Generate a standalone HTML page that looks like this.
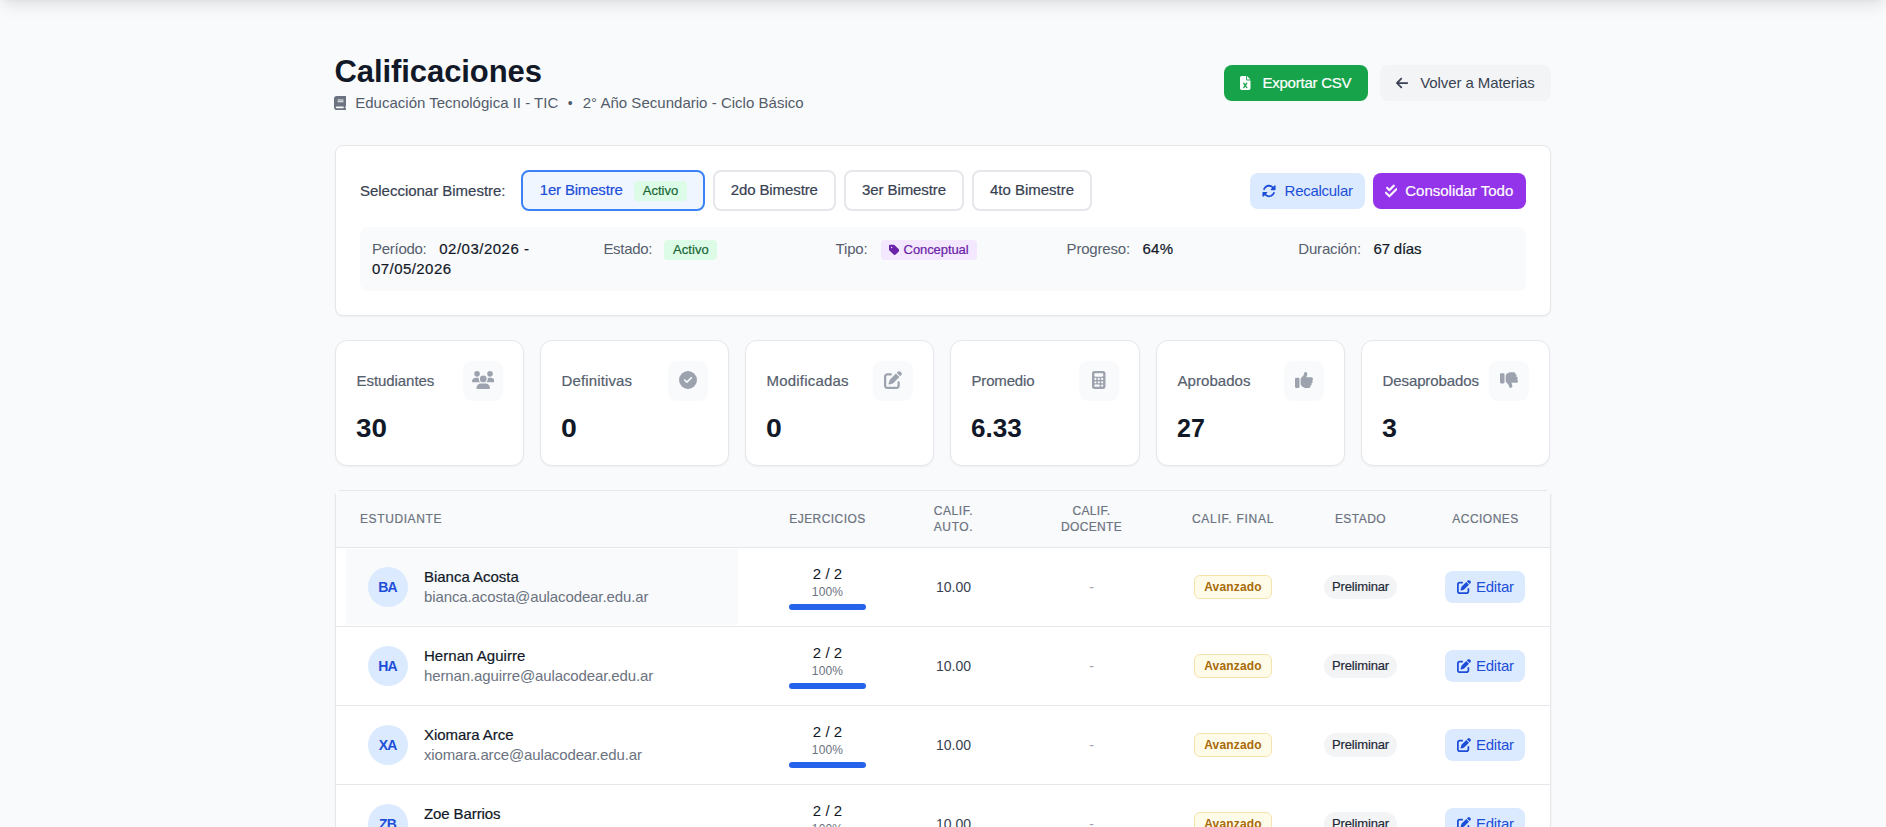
<!DOCTYPE html>
<html lang="es">
<head>
<meta charset="utf-8">
<title>Calificaciones</title>
<style>
*{box-sizing:border-box;margin:0;padding:0}
html,body{width:1886px;height:827px;overflow:hidden}
body{background:#f9fafb;font-family:"Liberation Sans",sans-serif;color:#111827;font-size:14px;line-height:20px;position:relative}
svg{display:block;fill:currentColor}
.topshadow{position:absolute;left:0;top:-66px;width:1886px;height:64px;background:#fff;box-shadow:0 10px 15px -3px rgba(0,0,0,.1),0 4px 6px -4px rgba(0,0,0,.1)}
.abs{position:absolute}
.med{-webkit-text-stroke:.2px currentColor}
/* header */
h1{position:absolute;left:334.5px;top:54px;font-size:30px;line-height:36px;font-weight:700;color:#111827;white-space:nowrap}
.sub{position:absolute;left:334px;top:93px;height:20px;display:flex;align-items:center;color:#535c6b;white-space:nowrap}
.sub svg{width:12.25px;height:14px;color:#6b7280;margin-right:9px}
.btn{position:absolute;height:36px;border-radius:8px;display:flex;align-items:center;white-space:nowrap;font-size:14px}
.b-exp{left:1224px;top:65px;width:144px;background:#16a34a;color:#fff;padding-left:16px}
.b-vol{left:1380px;top:65px;width:171px;background:#f3f4f6;color:#374151;padding-left:16px}
.b-rec{left:1250px;top:173px;width:115px;background:#dbeafe;color:#1d4ed8;padding-left:12px}
.b-con{left:1373px;top:173px;width:153px;background:#9333ea;color:#fff;padding-left:12px}
/* card */
.card{position:absolute;left:335px;top:145px;width:1216px;height:171px;background:#fff;border:1px solid #e5e7eb;border-radius:8px;box-shadow:0 1px 2px rgba(0,0,0,.05)}
.sel{position:absolute;left:360px;top:181px;color:#374151;white-space:nowrap}
.bim{position:absolute;top:170px;height:40.75px;border:2px solid #e5e7eb;border-radius:8px;background:#fff;color:#374151;display:flex;align-items:flex-start;justify-content:center;padding:8px 0 0;white-space:nowrap}
.bim.on{border-color:#3b82f6;background:#eff6ff;color:#1d4ed8}
.gbadge{display:inline-block;width:53px;text-align:center;background:#dcfce7;color:#166534;font-size:13px;line-height:16px;padding:2px 0;border-radius:4px;vertical-align:top}
.info{position:absolute;left:360px;top:227px;width:1166px;height:64px;background:#f9fafb;border-radius:8px}
.info .c{position:absolute;top:12px;white-space:nowrap;color:#555e6d}
.info .c b{font-weight:400;color:#111827}
/* stats */
.stat{position:absolute;top:340px;width:188.5px;height:126px;background:#fff;border:1px solid #e5e7eb;border-radius:12px;box-shadow:0 1px 2px rgba(0,0,0,.05)}
.stat .l{position:absolute;left:20.5px;top:30px;color:#555e6d;white-space:nowrap}
.stat .ic{position:absolute;right:20px;top:20px;width:40px;height:40px;border-radius:9px;background:#f9fafb;color:#9ca3af;display:flex;align-items:center;justify-content:center;padding-bottom:2px}
.stat .n{position:absolute;left:19.5px;top:71px;font-size:24px;line-height:32px;font-weight:700;color:#111827;white-space:nowrap}
/* table */
.tbl{position:absolute;left:335px;top:490px;width:1216px;height:400px;background:#fff;border:1px solid #e5e7eb;border-radius:0;overflow:hidden;box-shadow:0 1px 2px rgba(0,0,0,.05)}
.patch{position:absolute;top:490px;width:4px;height:4px;background:#f9fafb}
.thead{position:absolute;left:0;top:0;width:1214px;height:57px;background:#f9fafb;border-bottom:1px solid #e5e7eb}
.th{position:absolute;font-size:12px;line-height:16px;color:#6b7280;text-transform:uppercase;letter-spacing:.6px;text-align:center;white-space:nowrap;transform:translateX(-50%)}
.row{position:absolute;left:0;width:1214px;height:79px;border-bottom:1px solid #e5e7eb}
.hl{position:absolute;left:10px;top:1px;width:392px;height:76px;background:#f9fafb}
.av{position:absolute;left:32px;top:19px;width:40px;height:40px;border-radius:50%;background:#dbeafe;color:#1d4ed8;font-weight:700;font-size:14px;letter-spacing:-.8px;text-indent:-.8px;line-height:40px;text-align:center}
.nm{position:absolute;left:88px;top:19px;color:#111827;white-space:nowrap}
.em{position:absolute;left:88px;top:39px;color:#6b7280;white-space:nowrap}
.cx{position:absolute;transform:translateX(-50%);white-space:nowrap;text-align:center}
.ej1{left:491.5px;top:16px;color:#111827}
.ej2{left:491.5px;top:36px;font-size:12px;line-height:16px;color:#6b7280}
.bar{position:absolute;left:453px;top:56px;width:77px;height:6px;border-radius:3px;background:#2563eb}
.au{left:617.5px;top:29px;color:#374151}
.dc{left:755.5px;top:29px;color:#9ca3af}
.bav{position:absolute;left:858px;top:27px;width:78px;height:24px;border:1px solid #f5e3ad;background:#fefce8;color:#a96a08;border-radius:6px;font-size:12px;line-height:22px;font-weight:700;text-align:center}
.bpr{position:absolute;left:988px;top:27px;width:73px;height:24px;background:#f3f4f6;color:#1f2937;border-radius:12px;font-size:12px;line-height:24px;text-align:center}
.bed{position:absolute;left:1109px;top:23px;width:80px;height:32px;background:#dbeafe;color:#1d4ed8;border-radius:8px;display:flex;align-items:center;padding-left:12px;font-size:14px}
.bed svg{width:14px;height:14px;margin-right:5px}
#ttl{font-size:31px;letter-spacing:-0.076px}
#s1{font-size:15px;letter-spacing:0.004px}
#s3{font-size:15px;letter-spacing:0.023px}
#t-exp{font-size:15px;letter-spacing:-0.246px}
#t-vol{font-size:15px;letter-spacing:-0.093px}
#t-sel{font-size:15px;letter-spacing:-0.020px}
#t-b1{font-size:15px;letter-spacing:-0.185px}
#t-b2{font-size:15px;letter-spacing:-0.098px}
#t-b3{font-size:15px;letter-spacing:-0.094px}
#t-b4{font-size:15px;letter-spacing:-0.018px}
#t-rec{font-size:15px;letter-spacing:-0.275px}
#t-con{font-size:15px;letter-spacing:-0.010px}
#t-per{font-size:15px;letter-spacing:-0.274px}
#t-d1{font-size:15px;letter-spacing:0.495px}
#t-d2{font-size:15px;letter-spacing:0.436px}
#t-est{font-size:15px;letter-spacing:-0.312px}
#t-tip{font-size:15px;letter-spacing:-0.199px}
#t-pro{font-size:15px;letter-spacing:-0.193px}
#t-64{font-size:15px;letter-spacing:0.384px}
#t-dur{font-size:15px;letter-spacing:-0.175px}
#t-67{font-size:15px;letter-spacing:-0.220px}
#t-act1{font-size:13px;letter-spacing:0.039px}
#t-act2{font-size:13px;letter-spacing:0.039px}
#t-conc{font-size:13px;letter-spacing:-0.087px}
#t-s1{font-size:15px;letter-spacing:-0.059px}
#t-s2{font-size:15px;letter-spacing:0.140px}
#t-s3{font-size:15px;letter-spacing:0.195px}
#t-s4{font-size:15px;letter-spacing:-0.172px}
#t-s5{font-size:15px;letter-spacing:0.055px}
#t-s6{font-size:15px;letter-spacing:-0.098px}
#t-n1{font-size:26px;display:inline-block;transform-origin:0 50%;transform:scaleX(1.069)}
#t-n2{font-size:26px;display:inline-block;transform-origin:0 50%;transform:scaleX(1.095)}
#t-n3{font-size:26px;display:inline-block;transform-origin:0 50%;transform:scaleX(1.095)}
#t-n4{font-size:26px;display:inline-block;transform-origin:0 50%;transform:scaleX(1.004)}
#t-n5{font-size:26px;display:inline-block;transform-origin:0 50%;transform:scaleX(0.961)}
#t-n6{font-size:26px;display:inline-block;transform-origin:0 50%;transform:scaleX(1.031)}
#nm0{font-size:15px;letter-spacing:-0.022px}
#nm1{font-size:15px;letter-spacing:0.038px}
#nm2{font-size:15px;letter-spacing:-0.041px}
#nm3{font-size:15px;letter-spacing:-0.103px}
#em0{font-size:15px;letter-spacing:-0.116px}
#em1{font-size:15px;letter-spacing:-0.119px}
#em2{font-size:15px;letter-spacing:-0.142px}
#em3{font-size:15px;letter-spacing:-0.001px}
#h2{font-size:12px;letter-spacing:0.443px}
#h4{font-size:12px;letter-spacing:0.355px}
#h5{font-size:12px;letter-spacing:0.731px}
#h6{font-size:12px;letter-spacing:0.449px}
#h7{font-size:12px;letter-spacing:0.473px}
.t-ej1{font-size:15px;letter-spacing:0.053px}
.t-ej2{font-size:12px;letter-spacing:0.166px}
.t-au{font-size:14px;letter-spacing:0.038px}
.t-bav{font-size:12px;letter-spacing:0.181px}
.t-bpr{font-size:13px;letter-spacing:-0.135px}
.t-bed{font-size:15px;letter-spacing:-0.237px}
</style>
</head>
<body>
<div class="topshadow"></div>

<h1><span id="ttl">Calificaciones</span></h1>
<div class="sub"><svg viewBox="0 0 448 512"><path d="M96 0C43 0 0 43 0 96V416c0 53 43 96 96 96H384h32c17.700 0 32-14.300 32-32s-14.300-32-32-32V384c17.700 0 32-14.300 32-32V32c0-17.700-14.300-32-32-32H384 96zm0 384H352v64H96c-17.700 0-32-14.300-32-32s14.300-32 32-32zm32-240c0-8.800 7.200-16 16-16H336c8.800 0 16 7.200 16 16s-7.200 16-16 16H144c-8.800 0-16-7.200-16-16zm16 48H336c8.800 0 16 7.200 16 16s-7.200 16-16 16H144c-8.800 0-16-7.200-16-16s7.200-16 16-16z"/></svg><span id="s1">Educación Tecnológica II - TIC</span><span id="s2" style="margin:0 10px 0 9.5px">•</span><span id="s3">2° Año Secundario - Ciclo Básico</span></div>

<div class="btn b-exp"><svg style="width:10.5px;height:14px;margin-right:12px" viewBox="0 0 384 512"><path d="M64 0C28.700 0 0 28.700 0 64V448c0 35.300 28.700 64 64 64H320c35.300 0 64-28.700 64-64V160H256c-17.700 0-32-14.300-32-32V0H64zM256 0V128H384L256 0zM155.700 250.200L192 302.100l36.300-51.900c7.600-10.900 22.600-13.500 33.400-5.900s13.500 22.600 5.900 33.400L221.300 344l46.400 66.200c7.600 10.900 5 25.800-5.900 33.400s-25.800 5-33.400-5.900L192 385.800l-36.300 51.900c-7.600 10.900-22.600 13.500-33.400 5.900s-13.500-22.600-5.900-33.400L162.700 344l-46.300-66.200c-7.600-10.900-5-25.800 5.900-33.400s25.800-5 33.400 5.900z"/></svg><span id="t-exp" class="med">Exportar CSV</span></div>
<div class="btn b-vol"><svg style="width:12.25px;height:14px;margin-right:12px" viewBox="0 0 448 512"><path d="M9.400 233.400c-12.500 12.500-12.500 32.800 0 45.300l160 160c12.500 12.500 32.800 12.500 45.300 0s12.500-32.800 0-45.300L109.200 288 416 288c17.700 0 32-14.300 32-32s-14.300-32-32-32l-306.700 0L214.600 118.600c12.500-12.500 12.500-32.800 0-45.300s-32.800-12.500-45.300 0l-160 160z"/></svg><span id="t-vol">Volver a Materias</span></div>

<div class="card"></div>
<div class="sel med" id="t-sel">Seleccionar Bimestre:</div>
<div class="bim on" style="left:521px;width:184px;justify-content:flex-start;padding-left:16.8px"><span id="t-b1" class="med">1er Bimestre</span><span class="gbadge med" style="margin-left:11.4px;margin-top:1px"><span id="t-act1">Activo</span></span></div>
<div class="bim" style="left:713px;width:122.5px"><span id="t-b2" class="med">2do Bimestre</span></div>
<div class="bim" style="left:844px;width:120px"><span id="t-b3" class="med">3er Bimestre</span></div>
<div class="bim" style="left:972px;width:120px"><span id="t-b4" class="med">4to Bimestre</span></div>
<div class="btn b-rec"><svg style="width:14px;height:14px;margin-right:8.6px" viewBox="0 0 512 512"><path d="M142.900 142.900c62.200-62.200 162.700-62.500 225.300-1L327 183c-6.900 6.900-8.900 17.200-5.200 26.200s12.500 14.800 22.200 14.800H463.500c0 0 0 0 0 0H472c13.300 0 24-10.700 24-24V72c0-9.700-5.800-18.500-14.800-22.200s-19.300-1.700-26.200 5.200L413.400 96.600c-87.600-86.500-228.700-86.200-315.800 1C73.200 122 55.600 150.700 44.800 181.400c-5.900 16.700 2.900 34.900 19.500 40.800s34.900-2.900 40.800-19.500c7.700-21.800 20.200-42.300 37.800-59.800zM16 312v7.600 .7V440c0 9.700 5.800 18.500 14.800 22.200s19.300 1.700 26.200-5.200l41.600-41.600c87.600 86.500 228.700 86.200 315.800-1c24.400-24.400 42.100-53.100 52.900-83.700c5.900-16.700-2.900-34.900-19.500-40.800s-34.900 2.900-40.800 19.500c-7.700 21.800-20.200 42.300-37.800 59.800c-62.200 62.200-162.700 62.500-225.300 1L185 329c6.900-6.900 8.900-17.200 5.200-26.200s-12.500-14.800-22.200-14.800H48.400h-.7H40c-13.300 0-24 10.700-24 24z"/></svg><span id="t-rec">Recalcular</span></div>
<div class="btn b-con"><svg style="width:12.25px;height:14px;margin-right:8px" viewBox="0 0 448 512"><path stroke="currentColor" stroke-width="20" stroke-linejoin="round" d="M342.600 86.600c12.500-12.500 12.500-32.800 0-45.300s-32.800-12.500-45.300 0L160 178.700l-57.400-57.400c-12.500-12.500-32.800-12.500-45.300 0s-12.500 32.800 0 45.300l80 80c12.500 12.500 32.800 12.500 45.300 0l160-160zm96 128c12.500-12.500 12.500-32.800 0-45.300s-32.800-12.500-45.300 0L160 402.700 54.600 297.400c-12.500-12.500-32.800-12.500-45.300 0s-12.500 32.800 0 45.300l128 128c12.500 12.500 32.800 12.500 45.300 0l256-256z"/></svg><span id="t-con" class="med">Consolidar Todo</span></div>

<div class="info">
  <div class="c" style="left:12px"><span id="t-per">Período:</span> <b class="med" id="t-d1" style="margin-left:8.8px">02/03/2026 -</b><br><b class="med" id="t-d2">07/05/2026</b></div>
  <div class="c" style="left:243.4px"><span id="t-est">Estado:</span> <span class="gbadge med" style="position:absolute;left:61px;top:1px"><span id="t-act2">Activo</span></span></div>
  <div class="c" style="left:475.6px"><span id="t-tip">Tipo:</span> <span class="med" style="position:absolute;left:45px;top:1px;width:96px;height:20px;display:flex;align-items:center;background:#f3e8ff;color:#6b21a8;font-size:13px;line-height:16px;padding-left:8px;border-radius:4px"><svg style="width:10.5px;height:12px;margin-right:4.5px" viewBox="0 0 448 512"><path d="M0 80V229.500c0 17 6.700 33.300 18.700 45.300l176 176c25 25 65.500 25 90.500 0L418.700 317.300c25-25 25-65.500 0-90.500l-176-176c-12-12-28.300-18.700-45.300-18.700H48C21.500 32 0 53.500 0 80zm112 32a32 32 0 1 1 0 64 32 32 0 1 1 0-64z"/></svg><span id="t-conc">Conceptual</span></span></div>
  <div class="c" style="left:706.6px"><span id="t-pro">Progreso:</span> <b class="med" id="t-64" style="margin-left:8.6px">64%</b></div>
  <div class="c" style="left:938.3px"><span id="t-dur">Duración:</span> <b class="med" id="t-67" style="margin-left:8.8px">67 días</b></div>
</div>

<!-- stats -->
<div class="stat" style="left:335px;width:189px"><div class="l med" id="t-s1">Estudiantes</div><div class="ic"><svg style="width:22.500px;height:18px" viewBox="0 0 640 512"><path d="M144 0a80 80 0 1 1 0 160A80 80 0 1 1 144 0zM512 0a80 80 0 1 1 0 160A80 80 0 1 1 512 0zM0 298.700C0 239.800 47.800 192 106.700 192h42.700c15.900 0 31 3.500 44.600 9.700c-1.300 7.200-1.900 14.700-1.900 22.300c0 38.200 16.800 72.500 43.300 96c-.2 0-.4 0-.7 0H21.300C9.600 320 0 310.400 0 298.700zM405.300 320c-.2 0-.4 0-.7 0c26.600-23.500 43.300-57.800 43.300-96c0-7.600-.7-15-1.900-22.300c13.600-6.300 28.700-9.700 44.600-9.700h42.700C592.200 192 640 239.800 640 298.700c0 11.800-9.600 21.300-21.300 21.300H405.300zM224 224a96 96 0 1 1 192 0 96 96 0 1 1 -192 0zM128 485.300C128 411.700 187.700 352 261.300 352H378.700C452.300 352 512 411.700 512 485.300c0 14.700-11.900 26.700-26.700 26.700H154.700c-14.700 0-26.700-11.900-26.700-26.700z"/></svg></div><div class="n" id="t-n1">30</div></div>
<div class="stat" style="left:540px;width:189px"><div class="l med" id="t-s2">Definitivas</div><div class="ic"><svg style="width:18px;height:18px" viewBox="0 0 512 512"><path d="M256 512A256 256 0 1 0 256 0a256 256 0 1 0 0 512zM369 209L241 337c-9.400 9.400-24.600 9.400-33.900 0l-64-64c-9.400-9.400-9.400-24.600 0-33.900s24.600-9.400 33.900 0l47 47L335 175c9.400-9.400 24.600-9.400 33.900 0s9.400 24.600 0 33.900z"/></svg></div><div class="n" id="t-n2">0</div></div>
<div class="stat" style="left:745px;width:189px"><div class="l med" id="t-s3">Modificadas</div><div class="ic"><svg style="width:18px;height:18px" viewBox="0 0 512 512"><path d="M471.600 21.700c-21.900-21.900-57.300-21.900-79.200 0L362.300 51.700l97.900 97.900 30.100-30.100c21.900-21.900 21.900-57.300 0-79.200L471.600 21.700zm-299.200 220c-6.100 6.100-10.800 13.600-13.500 21.900l-29.600 88.800c-2.900 8.600-.6 18.100 5.800 24.600s15.900 8.700 24.600 5.800l88.800-29.600c8.200-2.700 15.700-7.400 21.900-13.500L437.700 172.300 339.700 74.300 172.400 241.700zM96 64C43 64 0 107 0 160V416c0 53 43 96 96 96H352c53 0 96-43 96-96V320c0-17.700-14.300-32-32-32s-32 14.300-32 32v96c0 17.700-14.300 32-32 32H96c-17.700 0-32-14.300-32-32V160c0-17.700 14.300-32 32-32h96c17.700 0 32-14.300 32-32s-14.300-32-32-32H96z"/></svg></div><div class="n" id="t-n3">0</div></div>
<div class="stat" style="left:950px;width:190px"><div class="l med" id="t-s4">Promedio</div><div class="ic"><svg style="width:13.500px;height:18px" viewBox="0 0 384 512"><path d="M64 0C28.700 0 0 28.700 0 64V448c0 35.300 28.700 64 64 64H320c35.300 0 64-28.700 64-64V64c0-35.300-28.700-64-64-64H64zM96 64H288c17.700 0 32 14.300 32 32v32c0 17.700-14.300 32-32 32H96c-17.700 0-32-14.300-32-32V96c0-17.700 14.300-32 32-32zm32 160a32 32 0 1 1 -64 0 32 32 0 1 1 64 0zM96 352a32 32 0 1 1 0-64 32 32 0 1 1 0 64zM64 416c0-17.700 14.300-32 32-32h96c17.700 0 32 14.300 32 32s-14.300 32-32 32H96c-17.700 0-32-14.300-32-32zM192 256a32 32 0 1 1 0-64 32 32 0 1 1 0 64zm32 64a32 32 0 1 1 -64 0 32 32 0 1 1 64 0zm64-64a32 32 0 1 1 0-64 32 32 0 1 1 0 64zm32 64a32 32 0 1 1 -64 0 32 32 0 1 1 64 0zM288 448a32 32 0 1 1 0-64 32 32 0 1 1 0 64z"/></svg></div><div class="n" id="t-n4">6.33</div></div>
<div class="stat" style="left:1156px;width:189px"><div class="l med" id="t-s5">Aprobados</div><div class="ic"><svg style="width:18px;height:18px" viewBox="0 0 512 512"><path d="M313.400 32.900c26 5.200 42.900 30.500 37.700 56.500l-2.300 11.400c-5.300 26.700-15.100 52.100-28.800 75.200H464c26.500 0 48 21.500 48 48c0 18.500-10.500 34.600-25.900 42.600C497 275.400 504 288.900 504 304c0 23.400-16.800 42.900-38.900 47.100c4.400 7.300 6.900 15.800 6.900 24.900c0 21.300-13.900 39.400-33.100 45.600c.7 3.300 1.100 6.800 1.100 10.400c0 26.500-21.500 48-48 48H294.500c-19 0-37.500-5.600-53.300-16.100l-38.500-25.700C176 420.400 160 390.400 160 358.300V320 272 247.100c0-29.200 13.300-56.700 36-75l7.400-5.900c26.500-21.200 44.600-51 51.200-84.200l2.300-11.400c5.200-26 30.500-42.900 56.500-37.700zM32 192H96c17.700 0 32 14.300 32 32V448c0 17.700-14.300 32-32 32H32c-17.700 0-32-14.300-32-32V224c0-17.700 14.300-32 32-32z"/></svg></div><div class="n" id="t-n5">27</div></div>
<div class="stat" style="left:1361px;width:189px"><div class="l med" id="t-s6">Desaprobados</div><div class="ic"><svg style="width:18px;height:18px" viewBox="0 0 512 512"><path transform="translate(0 512) scale(1 -1)" d="M313.400 32.900c26 5.200 42.900 30.500 37.700 56.500l-2.300 11.400c-5.300 26.700-15.100 52.100-28.800 75.200H464c26.500 0 48 21.500 48 48c0 18.500-10.500 34.600-25.900 42.600C497 275.400 504 288.900 504 304c0 23.400-16.800 42.900-38.900 47.100c4.400 7.300 6.900 15.800 6.900 24.900c0 21.300-13.900 39.400-33.100 45.600c.7 3.300 1.100 6.800 1.100 10.400c0 26.500-21.500 48-48 48H294.500c-19 0-37.500-5.600-53.300-16.100l-38.500-25.700C176 420.400 160 390.400 160 358.300V320 272 247.100c0-29.200 13.300-56.700 36-75l7.400-5.900c26.500-21.200 44.600-51 51.200-84.200l2.300-11.400c5.200-26 30.500-42.900 56.500-37.700z"/><path d="M32 64H96c17.700 0 32 14.300 32 32V320c0 17.700-14.300 32-32 32H32c-17.700 0-32-14.300-32-32V96c0-17.700 14.300-32 32-32z"/></svg></div><div class="n" id="t-n6">3</div></div>

<!-- table -->
<div class="tbl">
  <div class="thead">
    <div class="th med" id="h1" style="left:24px;top:20px;transform:none">Estudiante</div>
    <div class="th med" id="h2" style="left:491.500px;top:20px">Ejercicios</div>
    <div class="th med" id="h3" style="left:617.500px;top:12px">Calif.<br>Auto.</div>
    <div class="th med" id="h4" style="left:755.500px;top:12px">Calif.<br>Docente</div>
    <div class="th med" id="h5" style="left:897px;top:20px">Calif. Final</div>
    <div class="th med" id="h6" style="left:1024.500px;top:20px">Estado</div>
    <div class="th med" id="h7" style="left:1149.500px;top:20px">Acciones</div>
  </div>
  <div class="row" style="top:57px"><div class="hl"></div><div class="av"><span class="t-av" id="av0">BA</span></div><div class="nm med"><span id="nm0">Bianca Acosta</span></div><div class="em"><span id="em0">bianca.acosta@aulacodear.edu.ar</span></div><div class="cx ej1"><span class="t-ej1" id="ej1_0">2 / 2</span></div><div class="cx ej2"><span class="t-ej2" id="ej2_0">100%</span></div><div class="bar"></div><div class="cx au"><span class="t-au" id="au0">10.00</span></div><div class="cx dc">-</div><div class="bav"><span class="t-bav" id="bav0">Avanzado</span></div><div class="bpr med"><span class="t-bpr" id="bpr0">Preliminar</span></div><div class="bed"><svg viewBox="0 0 512 512"><path d="M471.600 21.700c-21.900-21.900-57.300-21.900-79.200 0L362.300 51.700l97.900 97.900 30.100-30.100c21.900-21.900 21.900-57.300 0-79.200L471.600 21.700zm-299.200 220c-6.100 6.100-10.800 13.600-13.500 21.900l-29.600 88.800c-2.900 8.600-.6 18.100 5.800 24.600s15.900 8.700 24.600 5.800l88.800-29.600c8.200-2.700 15.700-7.400 21.900-13.500L437.700 172.300 339.700 74.300 172.400 241.700zM96 64C43 64 0 107 0 160V416c0 53 43 96 96 96H352c53 0 96-43 96-96V320c0-17.700-14.300-32-32-32s-32 14.300-32 32v96c0 17.700-14.300 32-32 32H96c-17.700 0-32-14.300-32-32V160c0-17.700 14.300-32 32-32h96c17.700 0 32-14.300 32-32s-14.300-32-32-32H96z"/></svg><span class="t-bed" id="bed0">Editar</span></div></div>
  <div class="row" style="top:136px"><div class="av"><span class="t-av" id="av1">HA</span></div><div class="nm med"><span id="nm1">Hernan Aguirre</span></div><div class="em"><span id="em1">hernan.aguirre@aulacodear.edu.ar</span></div><div class="cx ej1"><span class="t-ej1" id="ej1_1">2 / 2</span></div><div class="cx ej2"><span class="t-ej2" id="ej2_1">100%</span></div><div class="bar"></div><div class="cx au"><span class="t-au" id="au1">10.00</span></div><div class="cx dc">-</div><div class="bav"><span class="t-bav" id="bav1">Avanzado</span></div><div class="bpr med"><span class="t-bpr" id="bpr1">Preliminar</span></div><div class="bed"><svg viewBox="0 0 512 512"><path d="M471.600 21.700c-21.900-21.900-57.300-21.900-79.200 0L362.300 51.700l97.900 97.900 30.100-30.100c21.900-21.900 21.900-57.300 0-79.200L471.600 21.700zm-299.200 220c-6.100 6.100-10.800 13.600-13.500 21.900l-29.600 88.800c-2.900 8.600-.6 18.100 5.800 24.600s15.900 8.700 24.600 5.800l88.800-29.600c8.200-2.700 15.700-7.400 21.900-13.500L437.700 172.300 339.700 74.300 172.400 241.700zM96 64C43 64 0 107 0 160V416c0 53 43 96 96 96H352c53 0 96-43 96-96V320c0-17.700-14.300-32-32-32s-32 14.300-32 32v96c0 17.700-14.300 32-32 32H96c-17.700 0-32-14.300-32-32V160c0-17.700 14.300-32 32-32h96c17.700 0 32-14.300 32-32s-14.300-32-32-32H96z"/></svg><span class="t-bed" id="bed1">Editar</span></div></div>
  <div class="row" style="top:215px"><div class="av"><span class="t-av" id="av2">XA</span></div><div class="nm med"><span id="nm2">Xiomara Arce</span></div><div class="em"><span id="em2">xiomara.arce@aulacodear.edu.ar</span></div><div class="cx ej1"><span class="t-ej1" id="ej1_2">2 / 2</span></div><div class="cx ej2"><span class="t-ej2" id="ej2_2">100%</span></div><div class="bar"></div><div class="cx au"><span class="t-au" id="au2">10.00</span></div><div class="cx dc">-</div><div class="bav"><span class="t-bav" id="bav2">Avanzado</span></div><div class="bpr med"><span class="t-bpr" id="bpr2">Preliminar</span></div><div class="bed"><svg viewBox="0 0 512 512"><path d="M471.600 21.700c-21.900-21.900-57.300-21.900-79.200 0L362.300 51.700l97.900 97.900 30.100-30.100c21.900-21.900 21.900-57.300 0-79.200L471.600 21.700zm-299.200 220c-6.100 6.100-10.800 13.600-13.500 21.900l-29.600 88.800c-2.900 8.600-.6 18.100 5.800 24.600s15.900 8.700 24.600 5.800l88.800-29.600c8.200-2.700 15.700-7.400 21.900-13.500L437.700 172.300 339.700 74.300 172.400 241.700zM96 64C43 64 0 107 0 160V416c0 53 43 96 96 96H352c53 0 96-43 96-96V320c0-17.700-14.300-32-32-32s-32 14.300-32 32v96c0 17.700-14.300 32-32 32H96c-17.700 0-32-14.300-32-32V160c0-17.700 14.300-32 32-32h96c17.700 0 32-14.300 32-32s-14.300-32-32-32H96z"/></svg><span class="t-bed" id="bed2">Editar</span></div></div>
  <div class="row" style="top:294px"><div class="av"><span class="t-av" id="av3">ZB</span></div><div class="nm med"><span id="nm3">Zoe Barrios</span></div><div class="em"><span id="em3">zoe.barrios@aulacodear.edu.ar</span></div><div class="cx ej1"><span class="t-ej1" id="ej1_3">2 / 2</span></div><div class="cx ej2"><span class="t-ej2" id="ej2_3">100%</span></div><div class="bar"></div><div class="cx au"><span class="t-au" id="au3">10.00</span></div><div class="cx dc">-</div><div class="bav"><span class="t-bav" id="bav3">Avanzado</span></div><div class="bpr med"><span class="t-bpr" id="bpr3">Preliminar</span></div><div class="bed"><svg viewBox="0 0 512 512"><path d="M471.600 21.700c-21.900-21.900-57.300-21.900-79.200 0L362.300 51.700l97.900 97.900 30.100-30.100c21.900-21.900 21.900-57.300 0-79.200L471.600 21.700zm-299.200 220c-6.100 6.100-10.800 13.600-13.500 21.900l-29.600 88.800c-2.900 8.600-.6 18.100 5.800 24.600s15.900 8.700 24.600 5.800l88.800-29.600c8.200-2.700 15.700-7.400 21.900-13.500L437.700 172.300 339.700 74.300 172.400 241.700zM96 64C43 64 0 107 0 160V416c0 53 43 96 96 96H352c53 0 96-43 96-96V320c0-17.700-14.300-32-32-32s-32 14.300-32 32v96c0 17.700-14.300 32-32 32H96c-17.700 0-32-14.300-32-32V160c0-17.700 14.300-32 32-32h96c17.700 0 32-14.300 32-32s-14.300-32-32-32H96z"/></svg><span class="t-bed" id="bed3">Editar</span></div></div>
</div>
<div class="patch" style="left:335px"></div><div class="patch" style="left:1547px"></div>
</body>
</html>
